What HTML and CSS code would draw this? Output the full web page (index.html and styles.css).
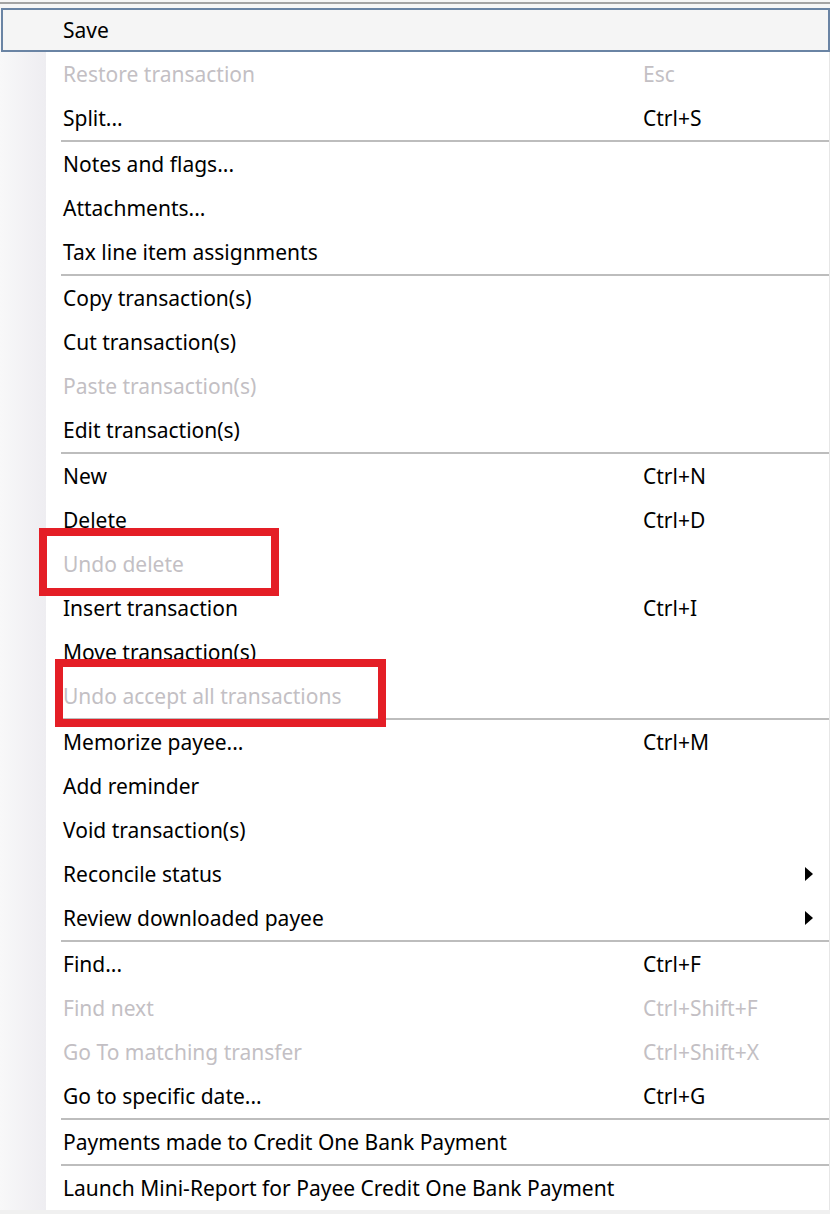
FILE: index.html
```html
<!DOCTYPE html>
<html>
<head>
<meta charset="utf-8">
<link rel="stylesheet" href="styles.css">
</head>
<body>
<div class="page">
  <div class="top"><div class="topline"></div></div>
  <div class="menu">
    <div class="item active"><span class="label">Save</span></div>
    <div class="item disabled"><span class="label">Restore transaction</span><span class="key">Esc</span></div>
    <div class="item"><span class="label">Split...</span><span class="key">Ctrl+S</span></div>
    <div class="sep"></div>
    <div class="item"><span class="label">Notes and flags...</span></div>
    <div class="item"><span class="label">Attachments...</span></div>
    <div class="item"><span class="label">Tax line item assignments</span></div>
    <div class="sep"></div>
    <div class="item"><span class="label">Copy transaction(s)</span></div>
    <div class="item"><span class="label">Cut transaction(s)</span></div>
    <div class="item disabled"><span class="label">Paste transaction(s)</span></div>
    <div class="item"><span class="label">Edit transaction(s)</span></div>
    <div class="sep"></div>
    <div class="item"><span class="label">New</span><span class="key">Ctrl+N</span></div>
    <div class="item"><span class="label">Delete</span><span class="key">Ctrl+D</span></div>
    <div class="item disabled"><span class="label">Undo delete</span></div>
    <div class="item"><span class="label">Insert transaction</span><span class="key">Ctrl+I</span></div>
    <div class="item"><span class="label">Move transaction(s)</span></div>
    <div class="item disabled"><span class="label">Undo accept all transactions</span></div>
    <div class="sep"></div>
    <div class="item"><span class="label">Memorize payee...</span><span class="key">Ctrl+M</span></div>
    <div class="item"><span class="label">Add reminder</span></div>
    <div class="item"><span class="label">Void transaction(s)</span></div>
    <div class="item"><span class="label">Reconcile status</span><span class="key"></span><span class="arrow"></span></div>
    <div class="item"><span class="label">Review downloaded payee</span><span class="key"></span><span class="arrow"></span></div>
    <div class="sep"></div>
    <div class="item"><span class="label">Find...</span><span class="key">Ctrl+F</span></div>
    <div class="item disabled"><span class="label">Find next</span><span class="key">Ctrl+Shift+F</span></div>
    <div class="item disabled"><span class="label">Go To matching transfer</span><span class="key">Ctrl+Shift+X</span></div>
    <div class="item"><span class="label">Go to specific date...</span><span class="key">Ctrl+G</span></div>
    <div class="sep"></div>
    <div class="item"><span class="label">Payments made to Credit One Bank Payment</span></div>
    <div class="sep"></div>
    <div class="item"><span class="label">Launch Mini-Report for Payee Credit One Bank Payment</span></div>
  </div>
  <div class="mark mark-one"></div>
  <div class="mark mark-two"></div>
</div>
</body>
</html>
```

FILE: styles.css
```css
html, body {
  margin: 0;
  padding: 0;
  background: #f0f0f0;
}
body {
  font-family: "Noto Sans", "Open Sans", sans-serif;
  font-size: 21px;
  color: #000;
}
.page {
  position: relative;
  width: 830px;
}
.top {
  background: #f6f6f6;
  height: 8px;
  padding-top: 2px;
  box-sizing: border-box;
}
.topline {
  height: 2px;
  background: #a3a3a3;
}
.menu {
  width: 830px;
  box-sizing: border-box;
  border-right: 1px solid #e6e6e6;
  background: linear-gradient(to right, #f8f8f9 0px, #eeedf1 46px) 0 0 / 46px 100% no-repeat, #ffffff;
  display: flex;
  flex-direction: column;
}
.item {
  height: 44px;
  display: flex;
  align-items: center;
  padding-left: 63px;
  padding-bottom: 1px;
  box-sizing: border-box;
  white-space: nowrap;
}
.item.active {
  margin-left: 1px;
  width: 829px;
  padding-left: 60px;
  border: 2px solid #6a84a4;
  background: #f5f5f5;
  margin-right: -1px;
}
.item.disabled {
  color: #c3bfc4;
}
.label {
  width: 580px;
  flex: none;
}
.key {
  width: 162px;
  flex: none;
}
.arrow {
  width: 0;
  height: 0;
  border-left: 8px solid #000;
  border-top: 7px solid transparent;
  border-bottom: 7px solid transparent;
}
.sep {
  height: 2px;
  margin-left: 61px;
  background: #bdbdbd;
}
.mark {
  position: absolute;
  border: 8px solid #e41e26;
  box-sizing: border-box;
}
.mark-one {
  left: 39px;
  top: 528px;
  width: 240px;
  height: 68px;
}
.mark-two {
  left: 55px;
  top: 659px;
  width: 331px;
  height: 68px;
}
```
